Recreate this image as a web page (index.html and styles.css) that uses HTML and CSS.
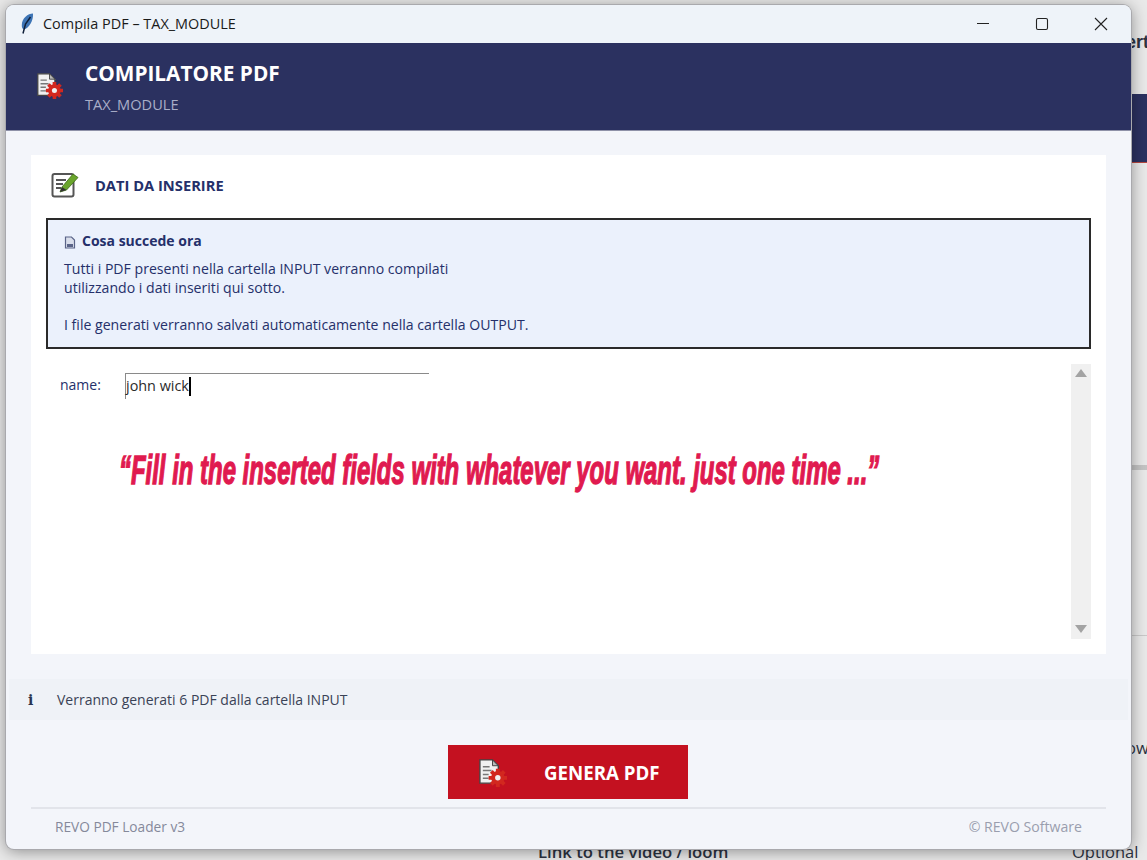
FILE: index.html
```html
<!DOCTYPE html>
<html lang="it">
<head>
  <meta charset="UTF-8" />
  <title>Compila PDF – TAX_MODULE</title>
  <link rel="stylesheet" href="styles.css">
</head>
<body>

<!-- Pagina dietro la finestra -->
<div class="behind">
  <span class="behind-ert">ert</span>
  <div class="behind-bar"></div>
  <div class="behind-line"></div>
  <div class="behind-rule"></div>
  <span class="behind-ow">ow</span>
  <span class="behind-link">Link to the video / loom</span>
  <span class="behind-opt">Optional</span>
</div>

<svg width="0" height="0" class="defs">
  <symbol id="doc-gear" viewBox="0 0 30 30">
    <path d="M2 2h13l6 6v18H2z" fill="#f1f1f1" stroke="#444" stroke-width="1.400"/>
    <path d="M15 2v6h6z" fill="#bbb" stroke="#444" stroke-width="1"/>
    <path d="M5 9h7M5 13h9M5 17h6M5 21h6" stroke="#777" stroke-width="1.600"/>
    <g transform="translate(20.500 20.500)">
      <circle r="7" fill="#d2281f"/>
      <path d="M-2-9.500h4v4h-4zM-2 5.500h4v4h-4zM-9.500-2h4v4h-4zM5.500-2h4v4h-4z" fill="#d2281f"/>
      <path d="M-2-9.500h4v4h-4zM-2 5.500h4v4h-4zM-9.500-2h4v4h-4zM5.500-2h4v4h-4z" fill="#d2281f" transform="rotate(45)"/>
      <circle r="2.800" fill="#f1f1f1"/>
    </g>
  </symbol>
</svg>

<div class="window">
  <div class="titlebar">
    <svg class="feather" width="14" height="21" viewBox="0 0 14 21">
      <path d="M13 .5C8 .5 2 5 1.800 12c-.1 2.500.7 4 2.200 4.500C9 15 13.500 8 13 .5z" fill="#3d74b5"/>
      <path d="M10.500 4 5.500 11 3 20.500" stroke="#10203a" stroke-width="1.500" fill="none"/>
    </svg>
    <span class="title-text">Compila PDF – TAX_MODULE</span>
    <div class="win-buttons">
      <svg width="14" height="14" viewBox="0 0 14 14"><path d="M1 6.500h12" stroke="#222" stroke-width="1"/></svg>
      <svg width="14" height="14" viewBox="0 0 14 14"><rect x="1.500" y="1.500" width="11" height="11" rx="1.500" fill="none" stroke="#222" stroke-width="1.100"/></svg>
      <svg width="14" height="14" viewBox="0 0 14 14"><path d="M1 1l12 12M13 1 1 13" stroke="#222" stroke-width="1.100"/></svg>
    </div>
  </div>

  <div class="app-header">
    <svg class="header-icon" width="27" height="27"><use href="#doc-gear"/></svg>
    <div>
      <div class="app-title">COMPILATORE PDF</div>
      <div class="app-sub">TAX_MODULE</div>
    </div>
  </div>

  <div class="content">
    <div class="card">
      <div class="card-head">
        <svg width="28" height="27" viewBox="0 0 28 27">
          <rect x="1.500" y="3" width="21" height="22.500" rx="2" fill="#fff" stroke="#555" stroke-width="2"/>
          <path d="M5 9h10M5 13h7M5 17h5" stroke="#555" stroke-width="1.800"/>
          <path d="M9 21l2-5L22 3l5 3.500L15.500 19z" fill="#6aa52c" stroke="#3c6a17" stroke-width=".8"/>
          <path d="M9 21l2-5 4.500 3z" fill="#333"/>
        </svg>
        <span class="card-title">DATI DA INSERIRE</span>
      </div>

      <div class="info-box">
        <div class="info-title">
          <svg width="12" height="13" viewBox="0 0 12 13">
            <path d="M1.500 1h6l3 3v8h-9z" fill="#d9deeb" stroke="#5a6488" stroke-width="1.200"/>
            <path d="M3 8h6v3H3z" fill="#5a6488"/>
          </svg>
          <span>Cosa succede ora</span>
        </div>
        <p>Tutti i PDF presenti nella cartella INPUT verranno compilati<br>utilizzando i dati inseriti qui sotto.</p>
        <p>I file generati verranno salvati automaticamente nella cartella OUTPUT.</p>
      </div>

      <div class="fields">
        <div class="field-area">
          <div class="field">
            <label class="field-label">name:</label>
            <div class="field-input">john wick<span class="caret"></span></div>
          </div>
          <div class="quote"><span>“Fill in the inserted fields with whatever you want. just one time ...”</span></div>
        </div>
        <div class="scrollbar">
          <span class="arrow-up"></span>
          <span class="arrow-down"></span>
        </div>
      </div>
    </div>

    <div class="status">
      <span class="status-i">i</span>
      <span>Verranno generati 6 PDF dalla cartella INPUT</span>
    </div>

    <div class="action">
      <button class="generate-btn">
        <svg width="29" height="29"><use href="#doc-gear"/></svg>
        <span>GENERA PDF</span>
      </button>
    </div>

    <div class="footer">
      <span>REVO PDF Loader v3</span>
      <span class="footer-right">© REVO Software</span>
    </div>
  </div>
</div>

</body>
</html>
```

FILE: styles.css
```css
* {
  box-sizing: border-box;
}

body {
  margin: 0;
  width: 1147px;
  height: 860px;
  overflow: hidden;
  position: relative;
  background: #e9e9e9;
  font-family: "Open Sans", "Noto Sans", sans-serif;
}

.defs {
  position: absolute;
}

/* Pagina dietro */
.behind {
  position: absolute;
  inset: 0;
  color: #2d3342;
}

.behind span {
  position: absolute;
}

.behind-ert {
  left: 1126px;
  top: 32px;
  font-size: 18px;
  font-weight: 600;
  font-family: "Liberation Sans", sans-serif;
}

.behind-bar {
  position: absolute;
  left: 1131px;
  top: 94px;
  width: 16px;
  height: 69px;
  background: #2b3160;
  border-bottom: 1px solid #b5463f;
}

.behind-line {
  position: absolute;
  left: 1131px;
  top: 465px;
  width: 16px;
  height: 5px;
  background: #c4c4c4;
}

.behind-rule {
  position: absolute;
  left: 1131px;
  top: 635px;
  width: 16px;
  height: 1px;
  background: #c9c9c9;
}

.behind-ow {
  left: 1126px;
  top: 736px;
  font-size: 16.500px;
}

.behind-link {
  left: 538px;
  top: 840px;
  font-size: 16.700px;
  font-weight: 600;
}

.behind-opt {
  left: 1072px;
  top: 840px;
  font-size: 16.500px;
}

/* Finestra */
.window {
  position: absolute;
  left: 6px;
  top: 5px;
  width: 1125px;
  height: 844px;
  border-radius: 8px;
  overflow: hidden;
  background: #f3f5fa;
  box-shadow: 0 0 0 1px #a9a9ad, 0 2px 16px rgba(0,0,0,0.42);
  display: flex;
  flex-direction: column;
}

.titlebar {
  height: 38px;
  background: #eef3f9;
  display: flex;
  align-items: center;
  padding: 0 0 2px 14px;
}

.feather {
  margin-right: 9px;
}

.title-text {
  font-size: 14.450px;
  color: #1a1a1a;
}

.win-buttons {
  margin-left: auto;
  display: flex;
  gap: 45px;
  padding: 2px 23px 0 0;
}

.app-header {
  height: 88px;
  background: #2b3160;
  display: flex;
  align-items: center;
  padding-left: 30px;
  gap: 22px;
  border-bottom: 1px solid #8e91a8;
}

.header-icon {
  margin-top: -2px;
}

.app-title {
  font-size: 20.800px;
  line-height: 28px;
  font-weight: 700;
  color: #fff;
}

.app-sub {
  font-size: 14.600px;
  line-height: 20px;
  color: #a9aec8;
  margin-top: 7px;
}

.content {
  flex: 1;
  display: flex;
  flex-direction: column;
  padding-top: 24px;
}

.card {
  margin: 0 25px;
  height: 499px;
  background: #fff;
  padding: 0 15px;
}

.card-head {
  display: flex;
  align-items: center;
  height: 59px;
  margin-bottom: 4px;
  padding-left: 5px;
  gap: 16px;
}

.card-title {
  font-size: 14.700px;
  font-weight: 700;
  color: #25306a;
}

.info-box {
  height: 131px;
  background: #ebf1fc;
  border: 2px solid #2a2a2a;
  padding: 11px 16px;
  color: #25306a;
  font-size: 14.100px;
  line-height: 19px;
}

.info-title {
  display: flex;
  align-items: center;
  gap: 6px;
  font-weight: 700;
  font-size: 14px;
  margin-bottom: 9px;
}

.info-title svg {
  margin-top: 3px;
}

.info-box p {
  margin: 0 0 18px;
}

.fields {
  display: flex;
  margin-top: 15px;
  height: 275px;
}

.field-area {
  flex: 1;
  min-width: 0;
}

.field {
  display: flex;
  padding: 9px 0 0 14px;
}

.field-label {
  width: 65px;
  padding-top: 2px;
  font-size: 14px;
  color: #25306a;
}

.field-input {
  width: 304px;
  height: 26px;
  border-top: 1px solid #8a8a8a;
  border-left: 1px solid #8a8a8a;
  font-size: 14.400px;
  color: #2b2b2b;
  line-height: 23px;
}

.caret {
  display: inline-block;
  width: 2.500px;
  height: 19px;
  background: #000;
  vertical-align: -5px;
}

.quote {
  margin: 49px 0 0 73px;
  height: 44px;
  white-space: nowrap;
}

.quote span {
  display: inline-block;
  font-family: "Liberation Sans", sans-serif;
  font-weight: 700;
  font-style: italic;
  font-size: 40px;
  line-height: 44px;
  color: #e01a4f;
  -webkit-text-stroke: 1.400px #e01a4f;
  transform: scaleX(0.598);
  transform-origin: left center;
}

.scrollbar {
  width: 20px;
  background: #f0f0f0;
  display: flex;
  flex-direction: column;
  justify-content: space-between;
  align-items: center;
  padding: 5px 0 6px;
}

.arrow-up {
  border: 6px solid transparent;
  border-top: 0;
  border-bottom: 8px solid #a3a3a3;
}

.arrow-down {
  border: 6px solid transparent;
  border-bottom: 0;
  border-top: 8px solid #a3a3a3;
}

.status {
  margin: 25px 3px 0;
  height: 41px;
  background: #eff2f7;
  display: flex;
  align-items: center;
  padding-left: 19px;
  font-size: 14px;
  color: #3a4256;
}

.status-i {
  font-family: "DejaVu Serif", serif;
  font-weight: 700;
  color: #2b3550;
  width: 29px;
}

.action {
  display: flex;
  justify-content: center;
  margin-top: 25px;
  padding-right: 1px;
}

.generate-btn {
  width: 240px;
  height: 54px;
  background: #c41120;
  border: none;
  color: #fff;
  font-family: inherit;
  font-size: 18.700px;
  font-weight: 700;
  display: flex;
  align-items: center;
  padding: 0 0 0 30px;
  gap: 37px;
}

.footer {
  margin: 8px 25px 0;
  border-top: 2px solid #e2e4ea;
  display: flex;
  justify-content: space-between;
  padding: 8px 24px;
  font-size: 13.700px;
  color: #85899a;
}

.footer-right {
  font-size: 14.100px;
  color: #9a9eae;
}
```
